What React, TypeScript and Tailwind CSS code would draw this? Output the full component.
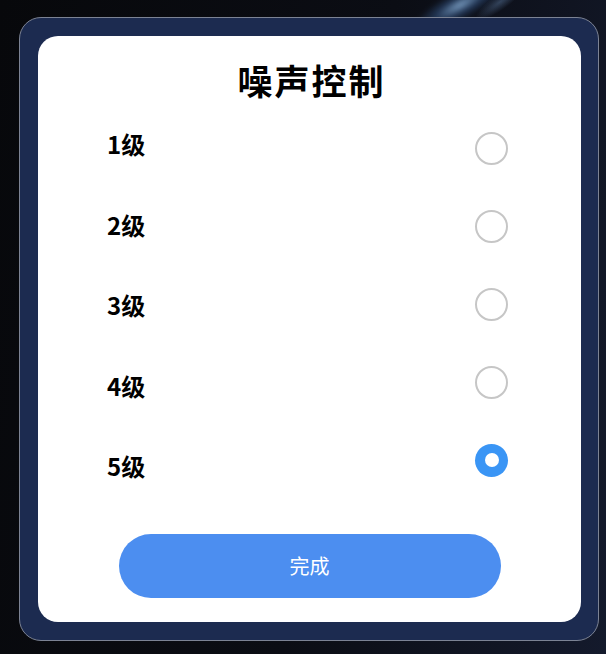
import { useState } from "react";

const levels = ["1级", "2级", "3级", "4级", "5级"];

export default function App() {
  const [selected, setSelected] = useState(4);

  return (
    <div
      className="relative w-[606px] h-[654px] overflow-hidden bg-[linear-gradient(100deg,#07080b_0%,#0b0d14_55%,#141a2c_100%)]"
      style={{ fontFamily: '"Noto Sans CJK SC", "Noto Sans", sans-serif' }}
    >
      {/* light streaks at top */}
      <div className="absolute left-[405px] top-[-10px] h-[30px] w-[110px] rotate-[-28deg] rounded-full bg-[radial-gradient(ellipse_at_center,rgba(150,195,240,0.75)_0%,rgba(70,120,190,0.35)_35%,transparent_70%)] blur-[2px]" />
      <div className="absolute left-[470px] top-[-6px] h-[16px] w-[60px] rotate-[-35deg] rounded-full bg-[radial-gradient(ellipse_at_center,rgba(120,160,210,0.35)_0%,transparent_70%)]" />

      <div className="absolute left-[19px] top-[17px] w-[580px] h-[624px] rounded-[22px] border border-[#7c8394] bg-[#1c2b50] py-[18px] pl-[18px] pr-[17px]">
        <div className="flex h-full flex-col items-center rounded-[20px] bg-white">
          <h1 className="mt-[24px] ml-[4px] text-[35px] font-bold leading-[40px] tracking-[2px] text-black">
            噪声控制
          </h1>

          <div className="mt-[4px] flex w-full items-start justify-between pl-[69px] pr-[73px]">
            <div className="flex flex-col">
              {levels.map((label, idx) => (
                <div
                  key={label}
                  className="flex h-[80.5px] cursor-pointer items-center"
                  onClick={() => setSelected(idx)}
                >
                  <span className="text-[24px] font-bold leading-none text-black">{label}</span>
                </div>
              ))}
            </div>
            <div className="flex flex-col pt-[5px]">
              {levels.map((label, idx) => (
                <div
                  key={label}
                  className="flex h-[78px] cursor-pointer items-center"
                  onClick={() => setSelected(idx)}
                >
                  {selected === idx ? (
                    <span className="flex h-[33px] w-[33px] items-center justify-center rounded-full bg-[#3a95f5]">
                      <span className="h-[14px] w-[14px] rounded-full bg-white" />
                    </span>
                  ) : (
                    <span className="h-[33px] w-[33px] rounded-full border-2 border-[#c6c6c6]" />
                  )}
                </div>
              ))}
            </div>
          </div>

          <button
            type="button"
            className="mt-[27px] flex h-[64px] w-[382px] items-center justify-center rounded-full bg-[#4c8ef0] text-[20px] text-white"
          >
            完成
          </button>
        </div>
      </div>
    </div>
  );
}
